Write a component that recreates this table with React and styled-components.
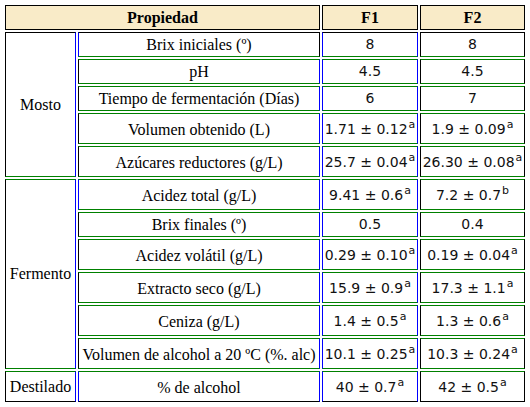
import React from "react";
import styled, { createGlobalStyle } from "styled-components";

const Global = createGlobalStyle`
  html, body { margin: 0; padding: 0; background: #ffffff; }
`;

const BLACK = "#000000";
const GREEN = "#008000";
const BLUE = "#0000ff";

const Grid = styled.div`
  display: grid;
  grid-template-columns: 71px 242px 96px 105px;
  grid-template-rows: 25px 25px 25px 25px 31px 31px 31px 25px 31px 31px 31px 31px 31px;
  gap: 2px;
  margin: 5px;
  width: max-content;
`;

const Cell = styled.div`
  box-sizing: border-box;
  display: flex;
  align-items: center;
  justify-content: center;
  text-align: center;
  white-space: nowrap;
  border-style: solid;
  border-width: 1px;
  border-top-color: ${(p) => p.$t || BLACK};
  border-right-color: ${(p) => p.$r || BLACK};
  border-bottom-color: ${(p) => p.$b || BLACK};
  border-left-color: ${(p) => p.$l || BLACK};
  color: #000;
  grid-row: ${(p) => p.$row || "auto"};
  grid-column: ${(p) => p.$col || "auto"};
`;

const HeadCell = styled(Cell)`
  background: #f9ebc8;
  font-family: "Liberation Serif", "Times New Roman", serif;
  font-weight: bold;
  font-size: 16px;
`;

const GroupCell = styled(Cell)`
  font-family: "Liberation Serif", "Times New Roman", serif;
  font-size: 16px;
`;

const LabelCell = styled(Cell)`
  font-family: "Liberation Serif", "Times New Roman", serif;
  font-size: 16px;
  padding-top: ${(p) => (p.$tall ? "3px" : "0")};
`;

const ValueCell = styled(Cell)`
  font-family: "DejaVu Sans", Verdana, sans-serif;
  font-size: 14px;
  color: #111;
`;

const ValueText = styled.span`
  display: inline-block;
  line-height: 17px;
`;

const Sup = styled.sup`
  font-size: 11px;
  vertical-align: 6px;
  line-height: 11px;
  margin-left: 1px;
`;

const groups = [
  {
    name: "Mosto",
    rows: [
      ["Brix iniciales (º)", ["8"], ["8"]],
      ["pH", ["4.5"], ["4.5"]],
      ["Tiempo de fermentación (Días)", ["6"], ["7"]],
      ["Volumen obtenido (L)", ["1.71 ± 0.12", "a"], ["1.9 ± 0.09", "a"]],
      ["Azúcares reductores (g/L)", ["25.7 ± 0.04", "a"], ["26.30 ± 0.08", "a"]],
    ],
  },
  {
    name: "Fermento",
    rows: [
      ["Acidez total (g/L)", ["9.41 ± 0.6", "a"], ["7.2 ± 0.7", "b"]],
      ["Brix finales (º)", ["0.5"], ["0.4"]],
      ["Acidez volátil (g/L)", ["0.29 ± 0.10", "a"], ["0.19 ± 0.04", "a"]],
      ["Extracto seco (g/L)", ["15.9 ± 0.9", "a"], ["17.3 ± 1.1", "a"]],
      ["Ceniza (g/L)", ["1.4 ± 0.5", "a"], ["1.3 ± 0.6", "a"]],
      ["Volumen de alcohol a 20 ºC (%. alc)", ["10.1 ± 0.25", "a"], ["10.3 ± 0.24", "a"]],
    ],
  },
  {
    name: "Destilado",
    rows: [["% de alcohol", ["40 ± 0.7", "a"], ["42 ± 0.5", "a"]]],
  },
];

const Value = ({ v }) => (
  <ValueText>
    {v[0]}
    {v[1] ? <Sup>{v[1]}</Sup> : null}
  </ValueText>
);

export default function App() {
  const cells = [];
  let rowIndex = 2;
  const total = groups.reduce((n, g) => n + g.rows.length, 0);
  let count = 0;
  groups.forEach((g, gi) => {
    const start = rowIndex;
    const gTop = gi === 0 ? BLACK : GREEN;
    const gBottom = gi === groups.length - 1 ? BLACK : GREEN;
    cells.push(
      <GroupCell
        key={g.name}
        $row={`${start} / span ${g.rows.length}`}
        $col="1"
        $t={gTop}
        $b={gBottom}
        $l={BLACK}
        $r={BLUE}
      >
        {g.name}
      </GroupCell>
    );
    g.rows.forEach((r, ri) => {
      const top = count === 0 ? BLACK : GREEN;
      const bottom = count === total - 1 ? BLACK : GREEN;
      const row = `${rowIndex}`;
      const tall = Boolean(r[1][1]);
      cells.push(
        <LabelCell
          key={r[0]}
          $row={row}
          $col="2"
          $t={top}
          $b={bottom}
          $l={ri === 0 ? BLUE : BLACK}
          $r={count === 0 ? BLACK : BLUE}
          $tall={tall}
        >
          {r[0]}
        </LabelCell>
      );
      cells.push(
        <ValueCell key={r[0] + "f1"} $row={row} $col="3" $t={top} $b={bottom} $l={BLUE} $r={BLUE}>
          <Value v={r[1]} />
        </ValueCell>
      );
      cells.push(
        <ValueCell key={r[0] + "f2"} $row={row} $col="4" $t={top} $b={bottom} $l={BLACK} $r={BLACK}>
          <Value v={r[2]} />
        </ValueCell>
      );
      rowIndex += 1;
      count += 1;
    });
  });

  return (
    <>
      <Global />
      <Grid>
        <HeadCell $row="1" $col="1 / span 2">Propiedad</HeadCell>
        <HeadCell $row="1" $col="3">F1</HeadCell>
        <HeadCell $row="1" $col="4">F2</HeadCell>
        {cells}
      </Grid>
    </>
  );
}
